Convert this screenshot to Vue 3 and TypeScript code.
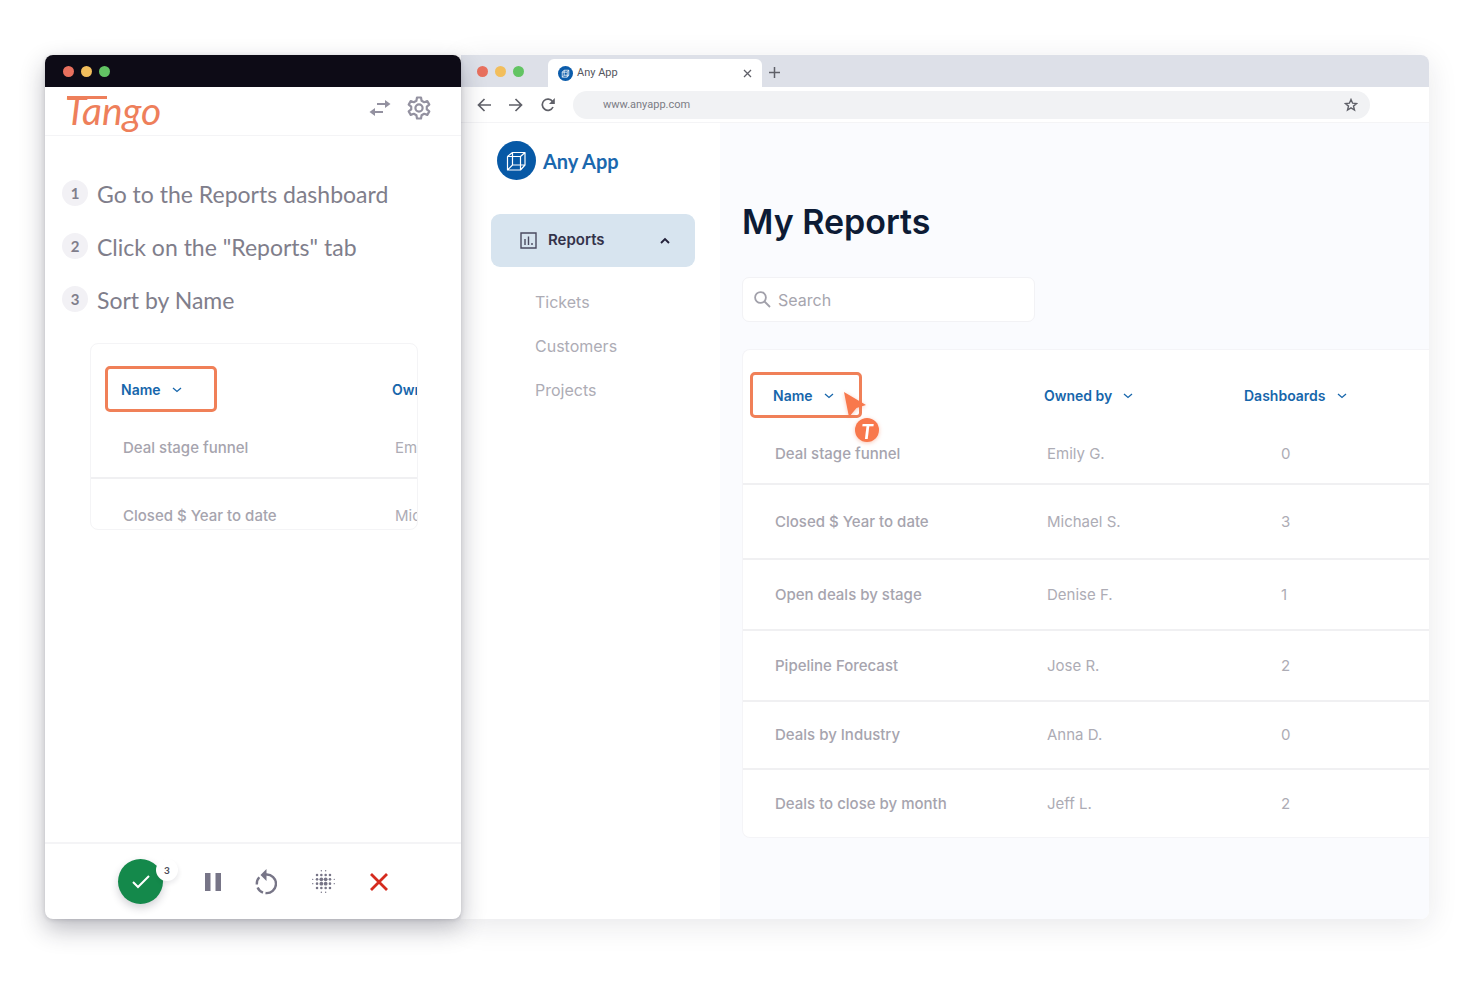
<script setup lang="ts">
import { ref } from 'vue'

interface Report {
  name: string
  owner: string
  dashboards: number
}

const query = ref('')
const steps: string[] = ['Go to the Reports dashboard', 'Click on the "Reports" tab', 'Sort by Name']
const links: string[] = ['Tickets', 'Customers', 'Projects']
const columns: string[] = ['Name', 'Owned by', 'Dashboards']
const reports: Report[] = [
  { name: 'Deal stage funnel', owner: 'Emily G.', dashboards: 0 },
  { name: 'Closed $ Year to date', owner: 'Michael S.', dashboards: 3 },
  { name: 'Open deals by stage', owner: 'Denise F.', dashboards: 1 },
  { name: 'Pipeline Forecast', owner: 'Jose R.', dashboards: 2 },
  { name: 'Deals by Industry', owner: 'Anna D.', dashboards: 0 },
  { name: 'Deals to close by month', owner: 'Jeff L.', dashboards: 2 },
]

// Radii of the pixelate icon, from the centre outwards
const dots: { x: number; y: number; r: number }[] = []
for (let row = 0; row < 6; row++) {
  for (let col = 0; col < 6; col++) {
    const dx = Math.abs(col - 2.5)
    const dy = Math.abs(row - 2.5)
    if (dx + dy > 3.5) continue
    const far = Math.max(dx, dy)
    dots.push({ x: 2 + col * 5, y: 2 + row * 5, r: far < 1 ? 2.2 : far < 2 ? 1.5 : 0.8 })
  }
}
</script>

<template>
  <div class="stage">
    <section class="panel" aria-label="Tango">
      <div class="titlebar">
        <i class="light red"></i><i class="light amber"></i><i class="light green"></i>
      </div>
      <header class="brandbar">
        <span class="wordmark">Tango</span>
        <div class="tools">
          <button type="button" aria-label="Switch">
            <svg width="22" height="18" viewBox="0 0 22 18" fill="none" stroke="#9391a0" stroke-width="2">
              <path d="M8 5H18M14 13H4" />
              <path d="M16 1L21.500 5L16 9ZM6 9L0.500 13L6 17Z" fill="#9391a0" stroke="none" />
            </svg>
          </button>
          <button type="button" aria-label="Settings">
            <svg width="24" height="24" viewBox="0 0 24 24" fill="none" stroke="#9391a0" stroke-width="2.200" stroke-linejoin="round">
              <path d="M10 1.500H14L14.600 4.700L17.200 6.200L20.300 5.100L22.300 8.600L19.800 10.600V13.400L22.300 15.400L20.300 18.900L17.200 17.800L14.600 19.300L14 22.500H10L9.400 19.300L6.800 17.800L3.700 18.900L1.700 15.400L4.200 13.400V10.600L1.700 8.600L3.700 5.100L6.800 6.200L9.400 4.700Z" />
              <circle cx="12" cy="12" r="3.600" />
            </svg>
          </button>
        </div>
      </header>

      <div class="guide">
        <ol class="steps">
          <li v-for="(step, i) in steps" :key="step">
            <span class="num">{{ i + 1 }}</span>
            <span class="text">{{ step }}</span>
          </li>
        </ol>
        <div class="preview">
          <table class="reports">
            <colgroup><col class="c-name" /><col class="c-owner" /></colgroup>
            <thead>
              <tr>
                <th v-for="(column, i) in columns.slice(0, 2)" :key="column" scope="col">
                  <button type="button" class="sort" :class="{ marked: i === 0 }">
                    {{ column }}
                    <svg width="10" height="6" viewBox="0 0 10 6"><path d="M1 1L5 4.500L9 1" /></svg>
                  </button>
                </th>
              </tr>
            </thead>
            <tbody>
              <tr v-for="report in reports.slice(0, 2)" :key="report.name">
                <td class="name">{{ report.name }}</td>
                <td>{{ report.owner }}</td>
              </tr>
            </tbody>
          </table>
        </div>
      </div>

      <footer class="controls">
        <button type="button" class="done" aria-label="Finish">
          <svg width="18" height="14" viewBox="0 0 18 14" fill="none" stroke="#fff" stroke-width="2"><path d="M1 7L6 12L17 1" /></svg>
          <span class="badge">3</span>
        </button>
        <button type="button" aria-label="Pause">
          <svg width="16" height="20" viewBox="0 0 16 20" fill="#777587"><path d="M0 1H5.500V19H0ZM10.500 1H16V19H10.500Z" /></svg>
        </button>
        <button type="button" aria-label="Restart">
          <svg width="22" height="26" viewBox="0 0 22 26" fill="none" stroke="#777587" stroke-width="2.400">
            <path d="M11 5.500A9.300 9.300 0 1 1 10.500 24" />
            <path d="M8 23.600A9.300 9.300 0 0 1 2.600 18.500M1.800 15.500A9.300 9.300 0 0 1 4.300 8.300" />
            <path d="M11.500 0V12L5.500 6Z" fill="#777587" stroke="none" />
          </svg>
        </button>
        <button type="button" aria-label="Blur">
          <svg width="25" height="25" viewBox="0 0 29 29" fill="#777587">
            <circle v-for="(dot, i) in dots" :key="i" :cx="dot.x" :cy="dot.y" :r="dot.r" />
          </svg>
        </button>
        <button type="button" aria-label="Cancel">
          <svg width="18" height="18" viewBox="0 0 18 18" fill="none" stroke="#d52b1e" stroke-width="2.800"><path d="M1 1L17 17M17 1L1 17" /></svg>
        </button>
      </footer>
    </section>

    <section class="browser" aria-label="Any App">
      <div class="tabs">
        <i class="light red"></i><i class="light amber"></i><i class="light green"></i>
        <div class="tab">
          <svg class="mark" width="15" height="15" viewBox="0 0 39 39" fill="none" stroke="#fff" stroke-width="2">
            <circle cx="19.500" cy="19.500" r="19.500" fill="#0b5cab" stroke="none" />
            <path d="M11 16H24V29H11ZM16 11H28V24H16ZM11 16L16 11M24 16L28 11M24 29L28 24M11 29L16 24" />
          </svg>
          <span class="tabname">Any App</span>
          <button type="button" aria-label="Close tab">
            <svg width="9" height="9" viewBox="0 0 9 9" stroke="#5f6068" stroke-width="1.300"><path d="M1 1L8 8M8 1L1 8" /></svg>
          </button>
        </div>
        <button type="button" class="plus" aria-label="New tab">
          <svg width="11" height="11" viewBox="0 0 11 11" stroke="#5f6068" stroke-width="1.500"><path d="M5.500 0V11M0 5.500H11" /></svg>
        </button>
      </div>
      <div class="toolbar">
        <button type="button" aria-label="Back">
          <svg width="14" height="14" viewBox="0 0 14 14"><path d="M14 7H1.500M7.500 1L1.500 7L7.500 13" /></svg>
        </button>
        <button type="button" aria-label="Forward">
          <svg width="14" height="14" viewBox="0 0 14 14"><path d="M0 7H12.500M6.500 1L12.500 7L6.500 13" /></svg>
        </button>
        <button type="button" aria-label="Reload">
          <svg width="14" height="14" viewBox="0 0 14 14"><path d="M12 9A5.600 5.600 0 1 1 11.500 3.500" /><path d="M13.800 0V6H8Z" class="solid" /></svg>
        </button>
        <div class="address">
          <input type="text" value="www.anyapp.com" aria-label="Address" />
          <button type="button" aria-label="Bookmark">
            <svg width="14" height="14" viewBox="0 0 14 14"><path d="M7 1.500L8.600 5.200L12.600 5.500L9.500 8.100L10.500 12L7 9.900L3.500 12L4.500 8.100L1.400 5.500L5.400 5.200Z" /></svg>
          </button>
        </div>
      </div>

      <div class="app">
        <aside class="sidebar">
          <div class="logo">
            <svg width="39" height="39" viewBox="0 0 39 39" fill="none" stroke="#fff" stroke-width="1.200" stroke-linejoin="round">
              <circle cx="19.500" cy="19.500" r="19.500" fill="#0759a6" stroke="none" />
              <path d="M10.500 15.500H23.500V29H10.500ZM15.500 11.500H28V24H15.500ZM10.500 15.500L15.500 11.500M23.500 15.500L28 11.500M23.500 29L28 24M10.500 29L15.500 24" />
            </svg>
            <span>Any App</span>
          </div>
          <nav>
            <button type="button" class="group">
              <svg width="17" height="17" viewBox="0 0 17 17" fill="none" stroke="#4b4a60" stroke-width="1.400">
                <path d="M1 1H16V16H1Z" /><path d="M5 7V13M8.500 4.500V13M12 11V13" />
              </svg>
              <span>Reports</span>
              <svg width="10" height="7" viewBox="0 0 10 7" fill="none" stroke="#23213a" stroke-width="1.900"><path d="M1 6L5 2L9 6" /></svg>
            </button>
            <ul>
              <li v-for="link in links" :key="link"><a href="#">{{ link }}</a></li>
            </ul>
          </nav>
        </aside>

        <main>
          <h1>My Reports</h1>
          <label class="search">
            <svg width="17" height="17" viewBox="0 0 17 17" fill="none" stroke="#a1a0aa" stroke-width="1.800"><circle cx="6.500" cy="6.500" r="5.400" /><path d="M10.500 10.500L16 16" /></svg>
            <input v-model="query" type="search" placeholder="Search" aria-label="Search" />
          </label>
          <div class="sheet">
            <table class="reports">
              <colgroup><col class="c-name" /><col class="c-owner" /><col /></colgroup>
              <thead>
                <tr>
                  <th v-for="(column, i) in columns" :key="column" scope="col">
                    <button type="button" class="sort" :class="{ marked: i === 0 }">
                      {{ column }}
                      <svg width="10" height="6" viewBox="0 0 10 6"><path d="M1 1L5 4.500L9 1" /></svg>
                    </button>
                    <span v-if="i === 0" class="pointer">
                      <svg width="24" height="26" viewBox="0 0 24 26" fill="#f8784c"><path d="M1 0L23 13L13.500 16L6 25Z" /></svg>
                      <b>T</b>
                    </span>
                  </th>
                </tr>
              </thead>
              <tbody>
                <tr v-for="report in reports" :key="report.name">
                  <td class="name">{{ report.name }}</td>
                  <td>{{ report.owner }}</td>
                  <td class="count">{{ report.dashboards }}</td>
                </tr>
              </tbody>
            </table>
          </div>
        </main>
      </div>
    </section>
  </div>
</template>

<style>
body {
  margin: 0;
  background: #fff;
}
</style>

<style scoped>
* {
  box-sizing: border-box;
}
.stage {
  display: grid;
  grid-template-columns: 416fr 968fr;
  padding: 55px 51px 68px 45px;
  font-family: Inter, "Liberation Sans", sans-serif;
}
button {
  display: flex;
  align-items: center;
  padding: 0;
  border: 0;
  background: none;
  color: inherit;
  font: inherit;
}
svg {
  display: block;
  flex: none;
}
input {
  min-width: 0;
  padding: 0;
  border: 0;
  outline: 0;
  background: none;
  font: inherit;
}
.light {
  width: 11px;
  height: 11px;
  border-radius: 50%;
}
.red { background: #e8705e; }
.amber { background: #f2be5c; }
.green { background: #62c463; }

/* Recorder panel */
.panel {
  position: relative;
  z-index: 1;
  display: flex;
  flex-direction: column;
  min-width: 0;
  border-radius: 8px;
  background: #fff;
  box-shadow: 0 10px 24px rgba(30, 30, 50, 0.3), 0 1px 4px rgba(30, 30, 50, 0.15);
}
.titlebar {
  display: flex;
  align-items: center;
  gap: 7px;
  height: 32px;
  padding-left: 18px;
  border-radius: 8px 8px 0 0;
  background: #0d0b16;
}
.brandbar {
  display: flex;
  justify-content: space-between;
  height: 49px;
  padding: 0 30px 0 20px;
  border-bottom: 1px solid #f4f4f6;
}
.wordmark {
  position: relative;
  color: #ee7f5b;
  font: italic 400 39px/46px Lato, sans-serif;
}
/* Long crossbar of the T, reaching over the next letter */
.wordmark::before {
  content: "";
  position: absolute;
  top: 9px;
  left: 2px;
  width: 40px;
  height: 3px;
  background: currentColor;
}
.tools {
  display: flex;
  align-items: center;
  gap: 16px;
  padding-bottom: 6px;
}
.guide {
  flex: 1;
  padding: 42px 43px 0 17px;
}
.steps {
  display: grid;
  gap: 23px;
  margin: 0;
  padding: 0;
  list-style: none;
  color: #807e8b;
  font: 400 23px/30px Lato, sans-serif;
}
.steps li {
  display: flex;
  align-items: center;
  gap: 9px;
  white-space: nowrap;
}
.text {
  padding-top: 2px;
  line-height: 28px;
}
.num {
  width: 26px;
  height: 26px;
  border-radius: 50%;
  background: #f2f1f5;
  font-size: 15px;
  font-weight: 700;
  line-height: 26px;
  text-align: center;
}
.preview {
  height: 187px;
  margin: 29px 0 0 28px;
  overflow: hidden;
  border: 1px solid #f4f4f6;
  border-radius: 8px;
}
.preview .reports {
  width: 471px;
}
.preview .reports th:first-child {
  padding-left: 14px;
}
.preview .marked {
  padding-left: 13px;
}
.controls {
  display: flex;
  align-items: center;
  gap: 34px;
  height: 77px;
  padding-left: 73px;
  border-top: 2px solid #f4f4f6;
}
.done {
  position: relative;
  justify-content: center;
  width: 45px;
  height: 45px;
  margin-right: 8px;
  border-radius: 50%;
  background: #14894b;
  box-shadow: 0 4px 8px rgba(30, 30, 50, 0.2);
}
.badge {
  position: absolute;
  top: 0;
  right: -15px;
  width: 22px;
  height: 22px;
  border-radius: 50%;
  background: #fff;
  box-shadow: 1px 3px 4px rgba(30, 30, 50, 0.08);
  color: #4b4a58;
  font: 700 10px/22px Lato, sans-serif;
  text-align: center;
}

/* Browser window */
.browser {
  display: flex;
  flex-direction: column;
  min-width: 0;
  border-radius: 0 8px 8px 0;
  background: #fff;
  box-shadow: 0 6px 30px rgba(30, 30, 50, 0.1);
}
.tabs {
  display: flex;
  align-items: center;
  gap: 7px;
  height: 32px;
  padding-left: 16px;
  border-radius: 0 8px 0 0;
  background: #dde0e8;
}
.tab {
  display: flex;
  align-items: center;
  align-self: flex-end;
  gap: 4px;
  width: 214px;
  height: 28px;
  margin-left: 17px;
  padding: 0 10px;
  border-radius: 6px 6px 0 0;
  background: #fff;
}
.tabname {
  flex: 1;
  color: #55565e;
  font: 400 11px/14px Roboto, sans-serif;
}
.plus {
  padding-top: 3px;
}
.toolbar {
  display: flex;
  align-items: center;
  gap: 18px;
  height: 36px;
  padding: 0 59px 0 16px;
  border-bottom: 1px solid #f4f4f6;
}
.toolbar svg {
  fill: none;
  stroke: #5f6068;
  stroke-width: 1.700;
}
.toolbar .solid {
  fill: #5f6068;
  stroke: none;
}
.address {
  display: flex;
  flex: 1;
  align-items: center;
  height: 28px;
  padding: 0 12px 0 30px;
  border-radius: 14px;
  background: #f1f2f4;
}
.address svg {
  stroke-width: 1.400;
}
.address input {
  flex: 1;
  color: #7b7c84;
  font: 400 11px/14px Roboto, sans-serif;
}
.app {
  display: grid;
  flex: 1;
  grid-template-columns: 259px 1fr;
}
.sidebar {
  padding: 18px 25px 0 30px;
}
.logo {
  display: flex;
  align-items: center;
  gap: 7px;
  padding-left: 6px;
  color: #1b68ae;
  font: 700 20px/24px Lato, sans-serif;
}
.group {
  gap: 11px;
  width: 100%;
  height: 53px;
  margin-top: 34px;
  padding: 0 25px 0 29px;
  border-radius: 9px;
  background: #d7e4ef;
  color: #33324a;
  font-size: 15px;
  font-weight: 600;
  text-align: left;
}
.group span {
  flex: 1;
  padding-bottom: 2px;
}
.sidebar ul {
  display: grid;
  gap: 24px;
  margin: 25px 0 0 44px;
  padding: 0;
  list-style: none;
  font-size: 16px;
  line-height: 20px;
}
.sidebar a {
  color: #adacb5;
  text-decoration: none;
}
main {
  min-width: 0;
  padding: 77px 0 81px 22px;
  border-radius: 0 0 8px 0;
  background: #fafbfe;
}
h1 {
  margin: 0;
  color: #0d1b35;
  font-size: 34px;
  font-weight: 600;
  line-height: 44px;
}
.search {
  display: flex;
  align-items: center;
  gap: 7px;
  width: 293px;
  height: 45px;
  margin-top: 33px;
  padding: 0 12px 0 11px;
  border: 1px solid #f2f2f5;
  border-radius: 7px;
  background: #fff;
}
.search input {
  flex: 1;
  color: #55565e;
  font-size: 16px;
}
.search input::placeholder {
  color: #a6a5ae;
  opacity: 1;
}
.sheet {
  margin-top: 27px;
  border: solid #f4f4f7;
  border-width: 1px 0 1px 1px;
  border-radius: 8px 0 0 8px;
  background: #fff;
}

/* Reports table */
.reports {
  width: 100%;
  border-collapse: collapse;
  table-layout: fixed;
}
.c-name { width: 271px; }
.c-owner { width: 200px; }
.reports th {
  position: relative;
  padding: 22px 0 6px 30px;
}
.reports th:first-child {
  padding-left: 7px;
}
.sort {
  gap: 11px;
  height: 46px;
  padding-top: 2px;
  color: #1766ab;
  font-size: 14px;
  font-weight: 600;
  line-height: 20px;
}
.sort svg {
  fill: none;
  stroke: #1766ab;
  stroke-width: 1.300;
}
.marked {
  width: 112px;
  padding-left: 20px;
  border: 3px solid #f08058;
  border-radius: 5px;
}
.pointer {
  position: absolute;
  top: 42px;
  left: 100px;
  filter: drop-shadow(0 1px 2px rgba(240, 110, 70, 0.4));
}
.pointer b {
  display: block;
  width: 24px;
  height: 24px;
  margin-left: 12px;
  border-radius: 50%;
  background: #f8784c;
  color: #fff;
  font: italic 700 21px/26px Lato, sans-serif;
  text-align: center;
}
.reports td {
  height: 71px;
  padding: 0 0 0 33px;
  border-top: 2px solid #f0f0f2;
  color: #adacb5;
  font-size: 15px;
  line-height: 20px;
}
.reports .name {
  padding-left: 32px;
  color: #a6a4ae;
  font-weight: 500;
}
.reports .count {
  padding-left: 67px;
}
.reports tbody tr:first-child td {
  height: 60px;
  border-top: 0;
}
.reports tbody tr:nth-child(2) td {
  height: 75px;
}
.reports tbody tr:nth-child(n + 5) td {
  height: 68px;
}
</style>
